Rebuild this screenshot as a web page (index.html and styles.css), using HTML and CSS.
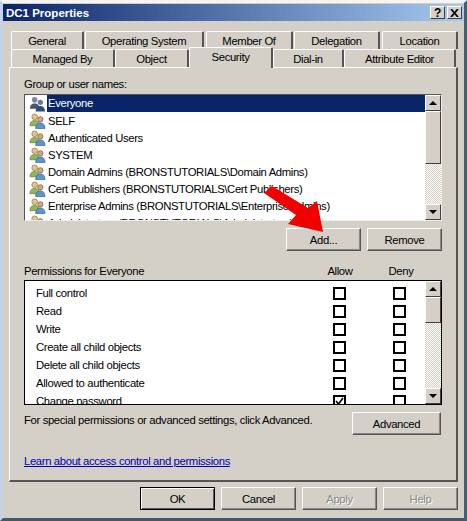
FILE: index.html
```html
<!DOCTYPE html>
<html lang="en">
<head>
  <meta charset="UTF-8" />
  <title>DC1 Properties</title>
  <link rel="stylesheet" href="styles.css">
</head>
<body>

  <svg class="defs" width="0" height="0">
    <symbol id="users" viewBox="0 0 18 16">
      <circle cx="6" cy="3.6" r="3" fill="#e8c48c" stroke="#8a6a3a" stroke-width=".7"/>
      <path d="M1 13c0-4 2-5.500 5-5.500s5 1.500 5 5.500z" fill="#8cb85c" stroke="#5c7a3a" stroke-width=".7"/>
      <circle cx="12" cy="6.200" r="2.800" fill="#d8a878" stroke="#6a5030" stroke-width=".7"/>
      <path d="M7 16c0-4 2-6 5-6s5 2 5 6z" fill="#5c94cc" stroke="#38608c" stroke-width=".7"/>
    </symbol>
    <symbol id="users-sel" viewBox="0 0 18 16">
      <circle cx="6" cy="3.600" r="3" fill="#7c88a4"/>
      <path d="M1 13c0-4 2-5.500 5-5.500s5 1.500 5 5.500z" fill="#46566c"/>
      <circle cx="12" cy="6.200" r="2.800" fill="#6c7890"/>
      <path d="M7 16c0-4 2-6 5-6s5 2 5 6z" fill="#2c4c7c"/>
    </symbol>
  </svg>

  <div class="window">
    <div class="titlebar">
      <span class="title">DC1 Properties</span>
      <button class="cap-btn">?</button>
      <button class="cap-btn cap-close">
        <svg width="9" height="8" viewBox="0 0 9 8"><path d="M1 0l7 8M8 0L1 8" fill="none" stroke="#000" stroke-width="1.800"/></svg>
      </button>
    </div>

    <div class="tabs">
      <div class="tab-row">
        <div class="tab w-73">General</div>
        <div class="tab w-119">Operating System</div>
        <div class="tab w-87">Member Of</div>
        <div class="tab w-86">Delegation</div>
        <div class="tab w-76">Location</div>
      </div>
      <div class="tab-row">
        <div class="tab w-104">Managed By</div>
        <div class="tab w-74">Object</div>
        <div class="tab tab-active w-84">Security</div>
        <div class="tab w-71">Dial-in</div>
        <div class="tab w-112">Attribute Editor</div>
      </div>
    </div>

    <div class="panel">
      <div class="label">Group or user names:</div>

      <div class="listbox users-list">
        <ul class="rows">
          <li class="user selected"><svg class="user-icon"><use href="#users-sel"/></svg><span>Everyone</span></li>
          <li class="user"><svg class="user-icon"><use href="#users"/></svg><span>SELF</span></li>
          <li class="user"><svg class="user-icon"><use href="#users"/></svg><span>Authenticated Users</span></li>
          <li class="user"><svg class="user-icon"><use href="#users"/></svg><span>SYSTEM</span></li>
          <li class="user"><svg class="user-icon"><use href="#users"/></svg><span>Domain Admins (BRONSTUTORIALS\Domain Admins)</span></li>
          <li class="user"><svg class="user-icon"><use href="#users"/></svg><span>Cert Publishers (BRONSTUTORIALS\Cert Publishers)</span></li>
          <li class="user"><svg class="user-icon"><use href="#users"/></svg><span>Enterprise Admins (BRONSTUTORIALS\Enterprise Admins)</span></li>
          <li class="user"><svg class="user-icon"><use href="#users"/></svg><span>Administrators (BRONSTUTORIALS\Administrators)</span></li>
        </ul>
        <div class="scrollbar">
          <div class="sb-btn"><i class="arrow-up"></i></div>
          <div class="sb-thumb thumb-users"></div>
          <div class="sb-track"></div>
          <div class="sb-btn"><i class="arrow-down"></i></div>
        </div>
      </div>

      <div class="btn-row">
        <button class="btn">Add...</button>
        <button class="btn">Remove</button>
      </div>

      <div class="perm-head">
        <span class="perm-title">Permissions for Everyone</span>
        <span class="perm-col">Allow</span>
        <span class="perm-col">Deny</span>
      </div>

      <div class="listbox perms-list">
        <ul class="rows">
          <li class="perm"><span class="perm-name">Full control</span><i class="check"></i><i class="check"></i></li>
          <li class="perm"><span class="perm-name">Read</span><i class="check"></i><i class="check"></i></li>
          <li class="perm"><span class="perm-name">Write</span><i class="check"></i><i class="check"></i></li>
          <li class="perm"><span class="perm-name">Create all child objects</span><i class="check"></i><i class="check"></i></li>
          <li class="perm"><span class="perm-name">Delete all child objects</span><i class="check"></i><i class="check"></i></li>
          <li class="perm"><span class="perm-name">Allowed to authenticate</span><i class="check"></i><i class="check"></i></li>
          <li class="perm"><span class="perm-name">Change password</span>
            <i class="check"><svg width="9" height="9" viewBox="0 0 9 9"><path d="M1 4l2.500 3L8 1" fill="none" stroke="#000" stroke-width="1.600"/></svg></i>
            <i class="check"></i>
          </li>
        </ul>
        <div class="scrollbar">
          <div class="sb-btn"><i class="arrow-up"></i></div>
          <div class="sb-thumb thumb-perms"></div>
          <div class="sb-track"></div>
          <div class="sb-btn"><i class="arrow-down"></i></div>
        </div>
      </div>

      <div class="advanced-row">
        <span>For special permissions or advanced settings, click Advanced.</span>
        <button class="btn btn-advanced">Advanced</button>
      </div>

      <a class="learn" href="#">Learn about access control and permissions</a>
    </div>

    <div class="footer">
      <button class="btn btn-default">OK</button>
      <button class="btn">Cancel</button>
      <button class="btn btn-disabled">Apply</button>
      <button class="btn btn-disabled">Help</button>
    </div>

    <!-- red arrow added on top of the screenshot -->
    <svg class="red-arrow" width="66" height="58" viewBox="0 0 66 58">
      <path d="M0 11L8 4L44 26L53 19L59 50L24 42L32 33Z" fill="#f00000"/>
    </svg>
  </div>

</body>
</html>
```

FILE: styles.css
```css
body {
  margin: 0;
  font-family: "Liberation Sans", Arial, sans-serif;
  font-size: 11.3px;
  letter-spacing: -0.36px;
  color: #000;
  background-color: #d4d0c8;
}

.defs {
  display: block;
  height: 0;
}

ul {
  list-style: none;
  margin: 0;
  padding: 0;
}

button {
  font-family: inherit;
  font-size: inherit;
  letter-spacing: inherit;
  color: #000;
  padding: 0;
  margin: 0;
}

.window {
  position: relative;
  box-sizing: border-box;
  width: 467px;
  height: 521px;
  overflow: hidden;
  background-color: #d4d0c8;
  border-style: solid;
  border-width: 3px;
  border-color: #f4f4f2 #4c5c70 #44586c #c4d4e4;
  padding-top: 1px;
}

/* title bar */
.titlebar {
  display: flex;
  align-items: center;
  height: 17px;
  padding: 0 2px 0 3px;
  background: linear-gradient(to right, #0a246a, #a6caf0);
}

.title {
  flex: 1;
  color: #fff;
  font-size: 11.5px;
  letter-spacing: 0;
  font-weight: bold;
}

.cap-btn {
  display: flex;
  align-items: center;
  justify-content: center;
  width: 15px;
  height: 13px;
  font-weight: bold;
  font-size: 12px;
  background-color: #d4d0c8;
  border: 1px solid;
  border-color: #fff #404040 #404040 #fff;
}

.cap-close {
  margin-left: 2px;
}

/* tabs */
.tabs {
  padding: 10px 0 0 8px;
}

.tab-row {
  display: flex;
  height: 18px;
}

.tab {
  box-sizing: border-box;
  height: 18px;
  line-height: 18px;
  text-align: center;
  background-color: #d4d0c8;
  border-top: 1px solid #fff;
  border-left: 1px solid #fff;
  border-right: 2px solid #555;
  border-top-left-radius: 2px;
  border-top-right-radius: 2px;
}

.tab-active {
  position: relative;
  z-index: 1;
  height: 21px;
  margin-top: -2px;
  line-height: 19px;
}

.w-73 { width: 73px; }
.w-119 { width: 119px; margin-left: 1px; }
.w-87 { width: 87px; margin-left: 2px; }
.w-86 { width: 86px; margin-left: 1px; }
.w-76 { width: 76px; margin-left: 2px; }
.w-104 { width: 104px; }
.w-74 { width: 74px; }
.w-84 { width: 84px; }
.w-71 { width: 71px; }
.w-112 { width: 112px; }

/* main panel */
.panel {
  box-sizing: border-box;
  width: 449px;
  height: 415px;
  margin-left: 6px;
  padding: 8px 15px 0 14px;
  border-top: 1px solid #fff;
  border-left: 1px solid #fff;
  border-right: 2px solid #555;
  border-bottom: 2px solid #555;
}

.label {
  height: 18px;
  line-height: 16px;
}

.listbox {
  display: flex;
  box-sizing: border-box;
  width: 418px;
  background-color: #fff;
  border-top: 1px solid #555;
  border-left: 1px solid #555;
  border-right: 1px solid #eee;
  border-bottom: 1px solid #eee;
  overflow: hidden;
}

.users-list {
  height: 127px;
}

.perms-list {
  height: 125px;
  border: 1px solid #000;
}

.rows {
  flex: 1;
  min-width: 0;
}

.user {
  display: flex;
  align-items: center;
  height: 17px;
  white-space: nowrap;
}

.user-icon {
  width: 17px;
  height: 16px;
  margin: 0 1px 0 4px;
  flex: none;
}

.user span {
  padding: 0 1px;
}

.selected span {
  flex: 1;
  align-self: stretch;
  line-height: 17px;
  background-color: #0a246a;
  color: #fff;
}

/* scroll bars */
.scrollbar {
  display: flex;
  flex-direction: column;
  flex: none;
  width: 16px;
}

.sb-btn {
  display: flex;
  align-items: center;
  justify-content: center;
  box-sizing: border-box;
  flex: none;
  height: 16px;
  background-color: #d4d0c8;
  border: 1px solid;
  border-color: #fff #404040 #404040 #fff;
}

.arrow-up,
.arrow-down {
  width: 0;
  height: 0;
  border-left: 4px solid transparent;
  border-right: 4px solid transparent;
}

.arrow-up {
  border-bottom: 4px solid #000;
}

.arrow-down {
  border-top: 4px solid #000;
}

.sb-thumb {
  box-sizing: border-box;
  flex: none;
  background-color: #d4d0c8;
  border: 1px solid;
  border-color: #fff #404040 #404040 #fff;
}

.thumb-users {
  height: 53px;
}

.thumb-perms {
  height: 26px;
}

.sb-track {
  flex: 1;
  background: repeating-conic-gradient(#d4d0c8 0 25%, #fff 0 50%) 0 0 / 2px 2px;
}

/* buttons */
.btn {
  box-sizing: border-box;
  width: 75px;
  height: 23px;
  background-color: #d4d0c8;
  border: 1px solid;
  border-color: #fff #555 #555 #fff;
  box-shadow: inset -1px -1px 0 #888;
}

.btn-row {
  display: flex;
  justify-content: flex-end;
  gap: 6px;
  width: 418px;
  margin-top: 7px;
}

.perm-head {
  display: flex;
  box-sizing: border-box;
  width: 418px;
  margin-top: 12px;
  height: 17px;
  padding-bottom: 2px;
  align-items: center;
}

.perm-title {
  flex: 1;
}

.perm-col {
  width: 60px;
  text-align: center;
  margin-right: 1px;
}

.perm-col + .perm-col {
  margin-right: 11px;
}

.perm {
  display: flex;
  align-items: center;
  height: 18px;
  white-space: nowrap;
}

.perm:first-child {
  margin-top: 3px;
}

.perm-name {
  flex: 1;
  padding-left: 11px;
}

.check {
  display: flex;
  align-items: center;
  justify-content: center;
  box-sizing: border-box;
  flex: none;
  width: 13px;
  height: 13px;
  margin-right: 47px;
  border: 2px solid #000;
  background-color: #fff;
}

.check + .check {
  margin-right: 19px;
}

.advanced-row {
  display: flex;
  justify-content: space-between;
  width: 417px;
  margin-top: 7px;
}

.advanced-row span {
  padding-top: 2px;
}

.btn-advanced {
  width: 89px;
}

.learn {
  display: block;
  margin-top: 20px;
  width: max-content;
  color: #0000b4;
  text-decoration: underline;
}

/* bottom buttons */
.footer {
  display: flex;
  justify-content: flex-end;
  gap: 6px;
  width: 455px;
  margin-top: 5px;
}

.btn-default {
  border: 1px solid #000;
  box-shadow: inset 1px 1px 0 #fff, inset -1px -1px 0 #555;
}

.btn-disabled {
  color: #888;
  text-shadow: 1px 1px 0 #fff;
}

.red-arrow {
  position: absolute;
  left: 261px;
  top: 179px;
}
```
